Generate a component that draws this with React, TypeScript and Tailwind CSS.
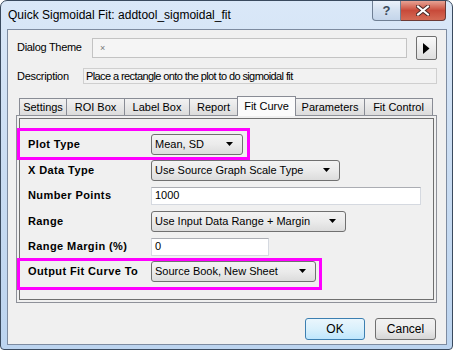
import React from 'react';

const tabs = [
  { name: 'Settings', w: 'w-[48px]' },
  { name: 'ROI Box', w: 'w-[59px]' },
  { name: 'Label Box', w: 'w-[66px]' },
  { name: 'Report', w: 'w-[49px]' },
  { name: 'Fit Curve', w: 'w-[59px]', active: true },
  { name: 'Parameters', w: 'w-[70px]' },
  { name: 'Fit Control', w: 'w-[69px]' },
];

function DownArrow() {
  return (
    <svg width="8" height="5" viewBox="0 0 8 5">
      <path d="M0 0h7L3.5 4z" fill="#000" />
    </svg>
  );
}

function Combo({ w, text }: { w: string; text: string }) {
  return (
    <div className={`${w} h-[21px] rounded-[3px] border border-[#707070] bg-gradient-to-b from-[#f3f3f3] via-[#ebebeb] to-[#dcdcdc] flex items-center pl-[3px] pr-[8px]`}>
      <span className="flex-1 text-[11px] leading-none text-black">{text}</span>
      <DownArrow />
    </div>
  );
}

function TextBox({ w, value }: { w: string; value: string }) {
  return (
    <div className={`${w} h-[18px] border border-[#d5d9e0] border-t-[#abadb3] bg-white flex items-center pl-[3px] text-[11px] text-black`}>
      {value}
    </div>
  );
}

function Row({ label, h, children }: { label: string; h: string; children: React.ReactNode }) {
  return (
    <div className={`${h} flex items-center`}>
      <div className="w-[131px] pl-[8px] text-[11px] font-bold tracking-[0.4px] text-black">{label}</div>
      {children}
    </div>
  );
}

export default function App() {
  return (
    <div className="w-[453px] h-[351px] bg-white font-['Liberation_Sans',Arial,sans-serif]">
      <div className="w-[453px] h-[350px] rounded-t-[7px] rounded-b-[4px] border border-[#3a4a5e] bg-gradient-to-b from-[#dae8f8] via-[#c9dcf2] to-[#bcd4ef] flex flex-col">
        {/* Title bar */}
        <div className="h-[28px] flex items-start">
          <div className="pl-[7px] pt-[7px] text-[12px] leading-[14px] text-black">
            Quick Sigmoidal Fit: addtool_sigmoidal_fit
          </div>
          <div className="ml-auto mr-[6px] flex">
            <div className="w-[29px] h-[20px] rounded-bl-[4px] border border-t-0 border-[#6f7f94] bg-gradient-to-b from-[#eaf1fa] via-[#d3e0f0] to-[#c4d5ea] flex items-center justify-center">
              <span className="text-[13px] font-bold leading-none text-[#3d4b5c]">?</span>
            </div>
            <div className="w-[45px] h-[20px] rounded-br-[4px] border border-l-0 border-t-0 border-[#6b3a36] bg-gradient-to-b from-[#e6a294] via-[#c84a3a] to-[#d46a55] flex items-center justify-center">
              <svg width="14" height="11" viewBox="0 0 14 11">
                <path d="M2 1.5l10 8M12 1.5l-10 8" stroke="#4a2a28" strokeWidth="4" strokeLinecap="square" />
                <path d="M2 1.5l10 8M12 1.5l-10 8" stroke="#fff" strokeWidth="2" strokeLinecap="square" />
              </svg>
            </div>
          </div>
        </div>

        {/* Client area */}
        <div className="ml-[6px] w-[440px] h-[316px] border border-[#7d8ba0] bg-[#f0f0f0] flex flex-col">
          {/* Dialog Theme */}
          <div className="mt-[6px] h-[24px] flex items-start">
            <div className="w-[84px] pl-[9px] pt-[3px] text-[11px] tracking-[-0.3px] text-black">Dialog Theme</div>
            <div className="mt-[2px] w-[315px] h-[20px] border border-[#c3c3c3] bg-[#f5f5f5] flex items-center pl-[7px]">
              <span className="text-[9px] leading-none text-[#777]">×</span>
            </div>
            <div className="ml-[9px] w-[21px] h-[24px] border border-[#707070] rounded-[2px] bg-gradient-to-b from-[#fafafa] to-[#dedede] flex items-center justify-center">
              <svg width="7" height="11" viewBox="0 0 7 11">
                <path d="M0 0l6.5 5.5L0 11z" fill="#000" />
              </svg>
            </div>
          </div>

          {/* Description */}
          <div className="mt-[8px] h-[16px] flex items-center">
            <div className="w-[75px] pl-[9px] text-[11px] tracking-[-0.3px] text-black">Description</div>
            <div className="w-[354px] h-[16px] border border-[#cfcfcf] bg-[#f2f2f2] flex items-center pl-[2px] text-[11px] tracking-[-0.6px] text-black">
              Place a rectangle onto the plot to do sigmoidal fit
            </div>
          </div>

          {/* Tabs */}
          <div className="mt-[12px] ml-[11px] h-[19px] flex items-end relative z-10">
            {tabs.map((t, i) =>
              t.active ? (
                <div
                  key={t.name}
                  className={`${t.w} ${i > 0 ? '-ml-px' : ''} h-[20px] -mb-px border border-b-0 border-[#898c95] bg-[#fbfbfb] flex items-center justify-center text-[11px] text-black`}
                >
                  {t.name}
                </div>
              ) : (
                <div
                  key={t.name}
                  className={`${t.w} ${i > 0 ? '-ml-px' : ''} h-[17px] border border-b-0 border-[#898c95] bg-gradient-to-b from-[#f2f2f2] to-[#dcdcdc] flex items-center justify-center text-[11px] text-black`}
                >
                  {t.name}
                </div>
              )
            )}
          </div>

          {/* Tab panel */}
          <div className="ml-[8px] w-[421px] h-[188px] border border-[#8e9199] p-[2px]">
            <div className="relative h-[182px] border border-[#6f6f6f] pt-[13px]">
              <Row label="Plot Type" h="h-[25px]">
                <Combo w="w-[92px]" text="Mean, SD" />
              </Row>
              <Row label="X Data Type" h="h-[26px]">
                <Combo w="w-[189px]" text="Use Source Graph Scale Type" />
              </Row>
              <Row label="Number Points" h="h-[25px]">
                <TextBox w="w-[270px]" value="1000" />
              </Row>
              <Row label="Range" h="h-[26px]">
                <Combo w="w-[195px]" text="Use Input Data Range + Margin" />
              </Row>
              <Row label="Range Margin (%)" h="h-[25px]">
                <TextBox w="w-[118px]" value="0" />
              </Row>
              <Row label="Output Fit Curve To" h="h-[25px]">
                <Combo w="w-[165px]" text="Source Book, New Sheet" />
              </Row>

              {/* highlight annotations */}
              <div className="absolute left-[-3px] top-[9px] w-[233px] h-[32px] border-[3px] border-[#ff00ff]" />
              <div className="absolute left-[-3px] top-[139px] w-[305px] h-[32px] border-[3px] border-[#ff00ff]" />
            </div>
          </div>

          {/* Buttons */}
          <div className="mt-[15px] mr-[10px] flex justify-end gap-[10px]">
            <div className="w-[60px] h-[22px] rounded-[3px] border border-[#3c7fb1] bg-gradient-to-b from-[#eaf6fd] via-[#d9f0fc] to-[#bee6fd] flex items-center justify-center text-[12px] text-black">
              OK
            </div>
            <div className="w-[61px] h-[22px] rounded-[3px] border border-[#707070] bg-gradient-to-b from-[#f2f2f2] via-[#ebebeb] to-[#d6d6d6] flex items-center justify-center text-[12px] text-black">
              Cancel
            </div>
          </div>
        </div>
      </div>
    </div>
  );
}
